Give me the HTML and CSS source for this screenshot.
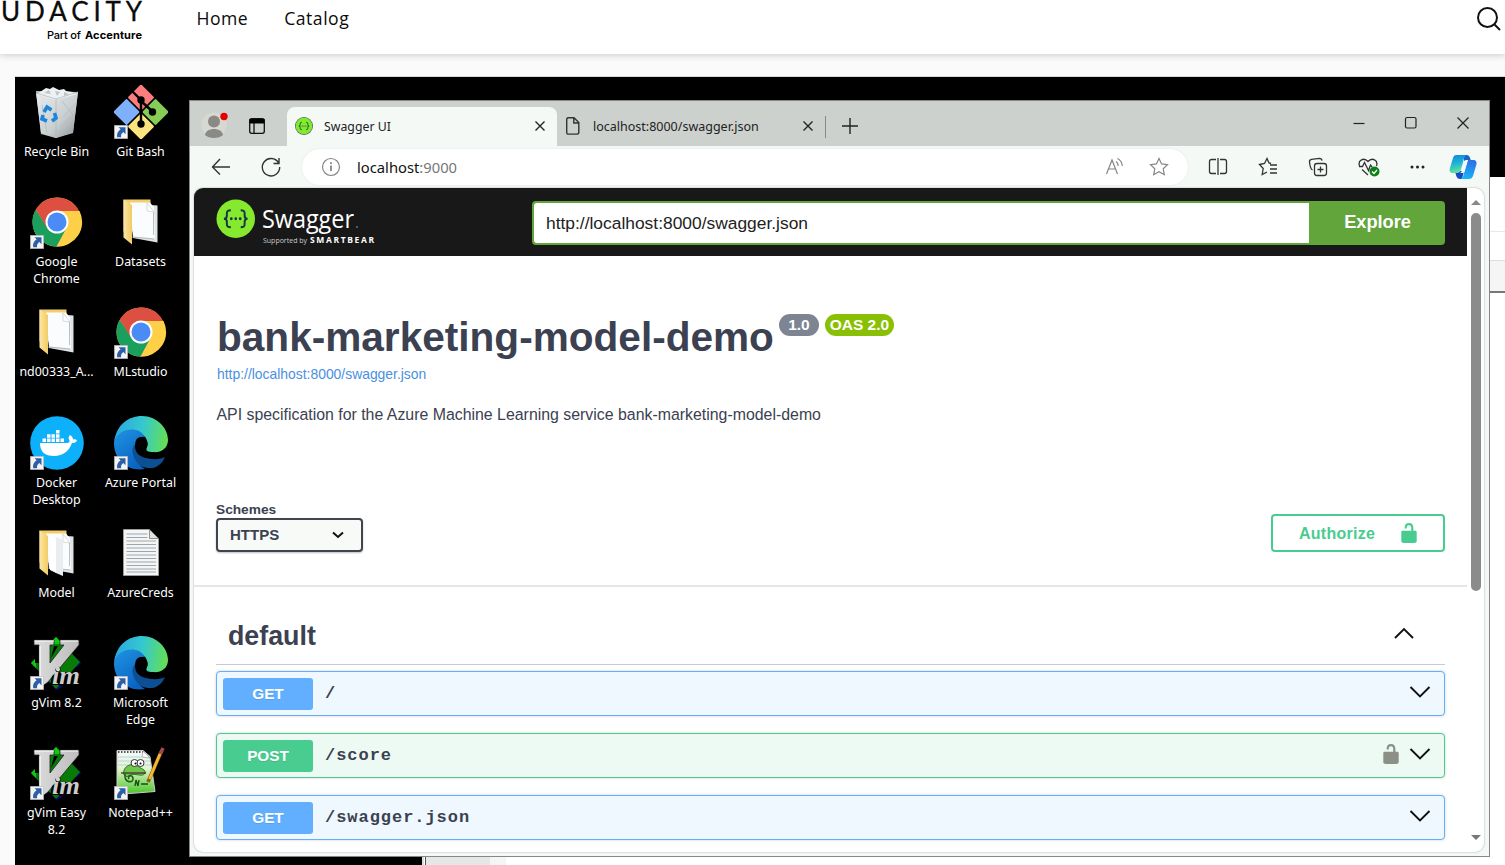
FILE: index.html
```html
<!DOCTYPE html>
<html lang="en">
<head>
<meta charset="utf-8">
<title>Udacity Workspace</title>
<link rel="stylesheet" href="styles.css">
</head>
<body>
<svg class="defs" width="0" height="0" aria-hidden="true">
  <defs>
    <linearGradient id="edgeTop" x1="0" y1="0.5" x2="1" y2="0.6"><stop offset="0" stop-color="#2aa9e0"/><stop offset=".5" stop-color="#35c8cf"/><stop offset="1" stop-color="#66e04f"/></linearGradient>
    <linearGradient id="edgeLeft" x1="0" y1="0" x2=".6" y2="1"><stop offset="0" stop-color="#1f95e2"/><stop offset="1" stop-color="#0a63c2"/></linearGradient>
    <linearGradient id="folderBack" x1="0" y1="0" x2="1" y2="0"><stop offset="0" stop-color="#fbe7a6"/><stop offset="1" stop-color="#f2cb62"/></linearGradient>
    <linearGradient id="vimV" x1="0" y1="0" x2="1" y2="0"><stop offset="0" stop-color="#dcdcdc"/><stop offset="1" stop-color="#bdbdbd"/></linearGradient>
    <linearGradient id="binBody" x1="0" y1="0" x2="1" y2="1"><stop offset="0" stop-color="#e8ecee"/><stop offset=".6" stop-color="#c9ced0"/><stop offset="1" stop-color="#8e9496"/></linearGradient>
    <linearGradient id="nppGrass" x1="0" y1="0" x2="0" y2="1"><stop offset="0" stop-color="#f4fbfd"/><stop offset=".4" stop-color="#e4f4d0"/><stop offset="1" stop-color="#47c425"/></linearGradient>
    <linearGradient id="copA" x1="0" y1="0" x2=".2" y2="1"><stop offset="0" stop-color="#1683d8"/><stop offset=".5" stop-color="#1cb3d8"/><stop offset="1" stop-color="#5fe39a"/></linearGradient>
    <linearGradient id="copB" x1=".6" y1="0" x2=".3" y2="1"><stop offset="0" stop-color="#2f6fe8"/><stop offset="1" stop-color="#16b9f5"/></linearGradient>
  </defs>
  <symbol id="arrow" viewBox="0 0 14 14"><path fill="#f4f4f4" stroke="#b9b9b9" stroke-width=".7" d="M.4.4h13.2v13.2H.4z"/><path fill="#2d5fa8" d="M4.500 2.200h7v7l-2.200-2.200c-2 1.500-2.500 3-2.200 5.300H3.200c-.6-3 .3-5.800 3.400-8z"/></symbol>
  <symbol id="chrome" viewBox="0 0 54 54">
    <circle cx="27" cy="27" r="24.500" fill="#fdd047"/>
    <path fill="#fdd047" d="M27 16h22.500A24.500 24.500 0 0 1 26 51.500L36.500 33z"/>
    <path fill="#1a9f5c" d="M26.500 51.500A24.500 24.500 0 0 1 5.800 14.700L17.500 32.500 27 38l9.500-5z"/>
    <path fill="#dc4f41" d="M5.800 14.700A24.500 24.500 0 0 1 49 16H27L17.300 33z"/>
    <circle cx="27" cy="27" r="11.500" fill="#fff"/><circle cx="27" cy="27" r="9.500" fill="#4b8bf5"/>
    <use href="#arrow" x="0" y="40" width="14" height="14"/>
  </symbol>
  <symbol id="edge" viewBox="0 0 54 54">
    <path fill="#0c4f94" d="M16 20c-5 20 5 33 23 32 6-2 10-6 12-11-8 4-24 4-25-12z"/>
    <path fill="url(#edgeLeft)" d="M0 27C0 18 8 11 18 13c7 0 12 4 14 8-6-1-11 2-11 7-6 6-1 19 10 25C12 56 0 43 0 27z"/>
    <path fill="url(#edgeTop)" d="M.5 24C3 9 14 0 28 0c15 0 26 12 26 24 0 9-8 13-15 12-5 0-9-1-6-5 2-4-1-12-8-16C15 11 5 15 .5 24z"/>
    <path fill="#000" d="M27 21c5 0 8 6 6 10s1 6 6 6c4 0 6-.5 8-1l3 4c-9 5-28 4-29-9 0-6 2-10 6-10z"/>
    <use href="#arrow" x="0" y="40" width="14" height="14"/>
  </symbol>
  <symbol id="folder" viewBox="0 0 54 54">
    <path fill="#f3cf6c" d="M9.500 4.500h27v32h-27z"/>
    <path fill="#dfe3e5" d="M17 8.500l26.500 2v37L19 43z"/>
    <path fill="#fafcfd" d="M16 7.500h20l4 5 1 31-22-2z"/>
    <path fill="#fff" stroke="#bfc4c7" stroke-width=".6" d="M33 8v8l7 1z"/>
    <path stroke="#aab0b4" stroke-width=".8" fill="none" d="M18 42l22 2M39.500 17v23"/>
    <path fill="url(#folderBack)" d="M9.500 4.500 18 10v39.500l-8.500-7z"/>
  </symbol>
  <symbol id="vim" viewBox="0 0 54 54">
    <path fill="#0a0a80" d="M45 21l6 6-5 5zM23 50l4 4 6-4z"/>
    <path fill="#087a08" d="M26 1l24 25-24 27L1 27z"/>
    <path fill="#10c810" d="M22 5l4-4 5 5-2 2h-7zM1 27l5-5v10z"/>
    <path fill="#000" d="M5 9h4v18H5zM24 10h4l-7 12z"/>
    <path fill="url(#vimV)" stroke="#222" stroke-width=".8" d="M4 4h20v5h-4v18L34 9h-4V4h19v5L18 46l-4 3H9V9H4z"/>
    <path fill="none" stroke="#fff" stroke-width="1.200" d="M4.500 5H24M30.500 5H48M10 10v30"/>
    <path fill="#000" d="M27 36h23v4l-2 9H20l2-9z"/>
    <circle cx="28" cy="33.500" r="2.400" fill="#ddd" stroke="#000" stroke-width=".8"/>
    <text x="22" y="48" textLength="28" lengthAdjust="spacingAndGlyphs" class="vim-text">im</text>
    <use href="#arrow" x="0" y="40" width="14" height="14"/>
  </symbol>
  <symbol id="lock" viewBox="0 0 20 20"><path fill="currentColor" d="M15.800 8H14V5.600C14 2.700 12.700 1 10 1 7.200 1 6 2.700 6 5.600V6h2v-.8C8 3.700 8.700 3 10 3s2 .8 2 2.200V8H4c-.6 0-1 .6-1 1.200v8.300c0 .5.700 1.200 1.200 1.400l1 .1h9.500l1-.1c.6-.2 1.300-.9 1.300-1.400V9.200c0-.6-.6-1.200-1.200-1.200z"/></symbol>
  <symbol id="braces" viewBox="0 0 40 40"><circle cx="20" cy="20" r="19.500" fill="#85ea2d"/><path fill="none" stroke="#173647" stroke-width="2" d="M15 11.500c-3 0-4 .6-4 3v2.500c0 2-1 3-3 3 2 0 3 1 3 3V25.500c0 2.400 1 3 4 3M25 11.500c3 0 4 .6 4 3v2.500c0 2 1 3 3 3-2 0-3 1-3 3V25.500c0 2.400-1 3-4 3"/><g fill="#173647"><circle cx="15.500" cy="20" r="1.400"/><circle cx="20" cy="20" r="1.400"/><circle cx="24.500" cy="20" r="1.400"/></g></symbol>
</svg>

<header class="site-header">
  <svg class="udacity" width="150" height="46" viewBox="0 0 150 46">
    <text class="brand" x="1" y="21" textLength="141">UDACITY</text>
    <text class="sub" x="47" y="38.500" textLength="34">Part of</text>
    <text class="sub sub-bold" x="85" y="38.500" textLength="57">Accenture</text>
  </svg>
  <nav class="site-nav"><a>Home</a><a>Catalog</a></nav>
  <svg class="search" width="28" height="28" viewBox="0 0 28 28"><circle cx="12.500" cy="12.500" r="9.500"/><path d="M19.500 19.500 25 25"/></svg>
</header>

<main class="desktop">
  <section class="shortcuts">
    <div class="shortcut"><svg viewBox="0 0 54 54">
      <path fill="#b9bfc1" d="M6 6l42 1-5 41-17 5-15-4z"/>
      <path fill="url(#binBody)" d="M6 8l20 5 22-6-5 40-17 6-15-5z"/>
      <path fill="#eef1f2" d="M7 9l6-4 3-2 4 1 3-2 6 3 5-1 2 2 6 1 5 2-10 3-12 3-10-3z"/>
      <path fill="#bfc5c7" d="M14 8l5-3 2 4zM25 6l5 1-3 4zM34 7l5 2-5 2z"/>
      <path stroke="#b4babd" stroke-width=".8" fill="none" d="M6 8l20 6 22-7M26 14v38M32 16l11 14-12 12M46 18l-13 14M12 20l5 28"/>
      <path fill="none" stroke="#1b86dc" stroke-width="3.600" d="M14 27l3-5 4.500 3M24.500 28l1.500 5-4 3M17 36l-5-2 1-4"/>
    </svg><span>Recycle Bin</span></div>
    <div class="shortcut"><svg viewBox="0 0 54 54">
      <rect x="17.500" y="3" width="19" height="19" rx="1.500" fill="#fb7d7d" transform="rotate(45 27 12.500)"/>
      <rect x="32" y="17.500" width="19" height="19" rx="1.500" fill="#86cd58" transform="rotate(45 41.500 27)"/>
      <rect x="17.500" y="32" width="19" height="19" rx="1.500" fill="#fbe380" transform="rotate(45 27 41.500)"/>
      <rect x="3" y="17.500" width="19" height="19" rx="1.500" fill="#7fb0fb" transform="rotate(45 12.500 27)"/>
      <path stroke="#000" stroke-width="2.400" fill="none" d="M18 6 27 15v24M27 16l12 11"/>
      <g><circle cx="27" cy="15" r="3.700"/><circle cx="38.500" cy="27" r="3.700"/><circle cx="27" cy="39" r="3.700"/></g>
      <use href="#arrow" x="0" y="40" width="14" height="14"/>
    </svg><span>Git Bash</span></div>
    <div class="shortcut"><svg><use href="#chrome"/></svg><span>Google Chrome</span></div>
    <div class="shortcut"><svg><use href="#folder"/></svg><span>Datasets</span></div>
    <div class="shortcut"><svg><use href="#folder"/></svg><span>nd00333_A...</span></div>
    <div class="shortcut"><svg><use href="#chrome"/></svg><span>MLstudio</span></div>
    <div class="shortcut"><svg viewBox="0 0 54 54">
      <circle cx="27" cy="27" r="26.800" fill="#0db0fb"/>
      <path fill="#fff" d="M10 27h27c2 0 3-1 2.500-2.500-1.500-2-1-4 .5-5.500 2 1 3 3 3 4.500 1.500-.5 3-.2 4 .7-.8 2-2.500 2.800-5 2.800C39 35 33 40 24 40c-9 0-14-4-14-13z"/>
      <path fill="#fff" d="M12.500 22.500h3.500V26h-3.500zM17 22.500h3.500V26H17zM21.500 22.500H25V26h-3.500zM26 22.500h3.500V26H26zM30.500 22.500H34V26h-3.500zM17 18.300h3.500v3.400H17zM21.500 18.300H25v3.400h-3.500zM26 18.300h3.500v3.400H26zM26 14h3.500v3.400H26z"/>
      <use href="#arrow" x="0" y="40" width="14" height="14"/>
    </svg><span>Docker Desktop</span></div>
    <div class="shortcut"><svg><use href="#edge"/></svg><span>Azure Portal</span></div>
    <div class="shortcut"><svg viewBox="0 0 54 54"><use href="#folder"/><path fill="#e9edef" d="M26 11l7 3v36l-7-3z"/><path fill="#fff" d="M20 10l6 4v33l-6-3z"/></svg><span>Model</span></div>
    <div class="shortcut"><svg viewBox="0 0 54 54">
      <path fill="#f5f5f5" stroke="#9b9b9b" d="M9.500 3.500h26l9 9v37h-35z"/><path fill="#e2e2e2" stroke="#777" stroke-width=".8" d="M35.500 3.500v9h9z"/>
      <path stroke="#9aa7ae" d="M12.500 8h21M12.500 11.500h21M12.500 15H42M12.500 18.500H42M12.500 22H42M12.500 25.500H42M12.500 29H42M12.500 32.500H42M12.500 36H42M12.500 39.500H42M12.500 43H42M12.500 46H42"/>
    </svg><span>AzureCreds</span></div>
    <div class="shortcut"><svg><use href="#vim"/></svg><span>gVim 8.2</span></div>
    <div class="shortcut"><svg><use href="#edge"/></svg><span>Microsoft Edge</span></div>
    <div class="shortcut"><svg><use href="#vim"/></svg><span>gVim Easy 8.2</span></div>
    <div class="shortcut"><svg viewBox="0 0 54 54">
      <path fill="url(#nppGrass)" stroke="#c8ccc8" d="M3 4.500h26l7 6 5 35-38 3z"/>
      <path stroke="#555" stroke-width="2" stroke-dasharray="1.500 1.500" d="M4 6h25"/>
      <path fill="#fff" stroke="#999" stroke-width=".7" d="M29 5l-1 6 8 1z"/>
      <path stroke="#a9c9dc" stroke-width=".8" d="M4 11h24M4 15h32M4 19h33"/>
      <path fill="#6dc84a" stroke="#1f5f16" stroke-width=".8" d="M10 29c-2-8 6-12 12-10l8 5c3 3 0 6-5 5-6-1-9-1-12 2z"/>
      <path fill="none" stroke="#1f5f16" stroke-width="1.600" d="M11 28c-1 9 9 10 8 4-1-4-6-2-4 1"/>
      <circle cx="20.500" cy="17" r="3.500" fill="#fff" stroke="#333"/><circle cx="26.500" cy="17" r="3.500" fill="#fff" stroke="#333"/><circle cx="21.500" cy="17.500" r="1"/><circle cx="26.500" cy="17.500" r="1"/>
      <path stroke="#4a1d3a" stroke-width="1.200" d="M7 27h25"/>
      <path stroke="#155015" stroke-width="1.400" fill="none" d="M21 40l1-6 2 6 1-6M27 38h7"/>
      <path stroke="#8a5a14" stroke-width="3.600" d="M34 36 47 6"/><path stroke="#f5b630" stroke-width="2.800" d="M35.500 33 46 8"/><path stroke="#a04a50" stroke-width="3.600" d="M46.500 7.500 49 2"/>
      <use href="#arrow" x="0" y="40" width="14" height="14"/>
    </svg><span>Notepad++</span></div>
  </section>

  <div class="back-window">
    <div class="bw-row bw-a"></div><div class="bw-row bw-b"></div><div class="bw-row bw-c"></div>
    <div class="bw-body"><i class="bw-s1"></i><i class="bw-s2"></i><i class="bw-s3"></i></div>
  </div>

  <section class="browser">
    <div class="tabs">
      <svg class="profile" width="30" height="30" viewBox="0 0 30 30"><circle cx="14" cy="16" r="12.500" fill="#d8d8d2"/><circle cx="14" cy="12.500" r="6" fill="#8b8984"/><path fill="#8b8984" d="M5 26c1-8 17-8 18 0-4 4-14 4-18 0z"/><circle cx="24" cy="7.500" r="3.700" fill="#e60000"/></svg>
      <svg class="tabmenu" width="18" height="18" viewBox="0 0 18 18"><rect x="1.700" y="1.700" width="14.600" height="14.600" rx="2" fill="none" stroke="#111" stroke-width="1.300"/><path d="M1.500 2h15v4.500h-15z"/><path d="M6 6v10" stroke="#111" stroke-width="1.300"/></svg>
      <div class="tab active">
        <svg width="18" height="18"><circle cx="9" cy="9" r="9" fill="#4c6f58"/><use href="#braces" x=".5" y=".5" width="17" height="17"/></svg><span>Swagger UI</span>
        <svg class="x" width="12" height="12" viewBox="0 0 12 12"><path d="M1.500 1.500l9 9M10.500 1.500l-9 9"/></svg>
      </div>
      <div class="tab">
        <svg width="18" height="20" viewBox="0 0 18 20"><path fill="none" stroke="#333" stroke-width="1.400" d="M3.500 1.700h6.500l4.800 4.800v9.800c0 1.200-.6 1.800-1.800 1.800H4.500c-1.200 0-1.800-.6-1.800-1.800V3.500c0-1.200.5-1.800 1.800-1.800M9.800 2v5h5"/></svg><span>localhost:8000/swagger.json</span>
        <svg class="x" width="12" height="12" viewBox="0 0 12 12"><path d="M1.500 1.500l9 9M10.500 1.500l-9 9"/></svg>
      </div>
      <i class="sep"></i>
      <svg class="plus" width="18" height="18" viewBox="0 0 18 18"><path d="M9 1v16M1 9h16"/></svg>
      <div class="controls">
        <svg width="14" height="14" viewBox="0 0 14 14"><path d="M1.500 7.500h11"/></svg>
        <svg width="14" height="14" viewBox="0 0 14 14"><rect x="1.500" y="1.500" width="10.500" height="10.500" rx="1.500"/></svg>
        <svg width="14" height="14" viewBox="0 0 14 14"><path d="M1.500 1.500l11 11M12.500 1.500l-11 11"/></svg>
      </div>
    </div>

    <div class="toolbar">
      <svg class="back" width="20" height="20" viewBox="0 0 20 20"><path d="M9 2 1.500 10 9 17.500M1.500 10H19"/></svg>
      <svg class="reload" width="22" height="22" viewBox="0 0 22 22"><path d="M18.500 6.800A8.700 8.700 0 1 0 19.700 11M19 2v5.500h-5.500"/></svg>
      <div class="address">
        <svg width="20" height="20" viewBox="0 0 20 20"><circle cx="10" cy="10" r="8.500"/><path stroke-width="1.800" d="M10 8.500V14M10 5.300v1.700"/></svg>
        <span class="host">localhost<span class="port">:9000</span></span>
        <svg class="read" width="20" height="20" viewBox="0 0 20 20"><path d="M1.500 17 7 3l5.500 14M3.500 12h7M11 4.500c1.500 1 2.200 2.500 2.200 4.500M12.500 1.500c3 1.500 4.600 4 4.800 7.500"/></svg>
        <svg class="star" width="20" height="20" viewBox="0 0 20 20"><path d="M10 1.500l2.600 5.400 5.900.8-4.300 4.100 1.100 5.900L10 14.800l-5.300 2.900 1.100-5.900L1.500 7.700l5.900-.8z"/></svg>
      </div>
      <div class="tools">
        <svg width="20" height="20" viewBox="0 0 20 20"><path d="M8 2.500H3.500c-1.200 0-2 .8-2 2v10c0 1.200.8 2 2 2H8M12 2.500h4.500c1.200 0 2 .8 2 2v10c0 1.200-.8 2-2 2H12M10 1v17"/></svg>
        <svg width="20" height="20" viewBox="0 0 20 20"><path d="M13 6.500 11 6 9 1.500 6.500 6.500 1.500 7.500l3.700 4-1 6L9 15M12 8h7M12 12h7M12 16h7"/></svg>
        <svg width="20" height="20" viewBox="0 0 20 20"><rect x="6.500" y="6.500" width="12" height="12" rx="2.500"/><path d="M12.500 9.500v6M9.500 12.500h6M4.500 13C2.500 12 2 10 1.500 5c-.2-1.500.5-2.300 2-2.600l8-1c1.500 0 2.300.8 2.500 2.300"/></svg>
        <svg width="22" height="20" viewBox="0 0 22 20"><path d="M1.500 9C-.5 3 6 0 10 4.500 14 0 20.500 3 18.500 9M1 9.500h3.500l2-4 4 8 2-5.500 1.500 2M4 12.500l6 5.500"/><circle cx="16.500" cy="14.500" r="5" fill="#0b8014" stroke="none"/><path stroke="#fff" d="M14 14.500l2 2 3-3.500"/></svg>
        <svg width="20" height="20" viewBox="0 0 20 20"><g fill="#222" stroke="none"><circle cx="4" cy="10" r="1.500"/><circle cx="9.500" cy="10" r="1.500"/><circle cx="15" cy="10" r="1.500"/></g></svg>
      </div>
      <svg class="copilot" width="28" height="26" viewBox="0 0 28 26"><path fill="#1749c8" d="M6 17h9l-2 8h-2c-3 0-4-3-5-8z"/><path fill="#1465c8" d="M15 1h3c2 0 3 2 4 6h-7z"/><path fill="url(#copB)" d="M19 6h5c3 0 4 2 3.400 4.500L24 22c-.8 2-2 3-4 3h-9c2-.5 3-2 3.700-4.500L17.500 10c.4-2.500.5-3.500 1.500-4z"/><path fill="url(#copA)" d="M7.500 1H18c-2 .5-2.700 2-3.300 4.500L12 15.500C11.300 18 10 19 8 19H4C1 19 .2 17 .8 14.500L4 4c.6-2 1.500-3 3.500-3z"/><path fill="#f5f9f6" d="M14.500 8.500c.4-1.500 1.200-2.300 2.600-2.500h2l-3.600 11.500c-.5 1.200-1.300 1.500-2.500 1.500h-2c1.200-.5 1.500-1 1.900-2.500z"/></svg>
    </div>

    <div class="viewport">
      <div class="page">
        <div class="topbar">
          <svg class="swagger" width="162" height="48" viewBox="0 0 162 48">
            <use href="#braces" x="0" y="1" width="39.500" height="39.500"/>
            <text class="sw-name" x="46" y="30" textLength="92" lengthAdjust="spacingAndGlyphs">Swagger</text>
            <circle cx="141" cy="29" r=".8" fill="#aaa"/>
            <text class="sw-sup" x="47" y="45" textLength="44" lengthAdjust="spacingAndGlyphs">Supported by</text>
            <text class="sw-sb" x="94" y="45" textLength="64">SMARTBEAR</text>
          </svg>
          <div class="url-form"><div class="url-input">http://localhost:8000/swagger.json</div><div class="explore">Explore</div></div>
        </div>
        <div class="info">
          <div class="title-row"><h1>bank-marketing-model-demo</h1><span class="badge version">1.0</span><span class="badge oas">OAS 2.0</span></div>
          <a class="spec-link">http://localhost:8000/swagger.json</a>
          <p class="desc">API specification for the Azure Machine Learning service bank-marketing-model-demo</p>
        </div>
        <div class="schemes">
          <div class="scheme-box"><label>Schemes</label>
            <div class="select"><span>HTTPS</span><svg width="14" height="10" viewBox="0 0 14 10"><path fill="none" stroke="#111" stroke-width="2" d="M2 2.500l5 4.500 5-4.500"/></svg></div></div>
          <div class="authorize"><span>Authorize</span><svg width="22" height="22"><use href="#lock"/></svg></div>
        </div>
        <div class="ops">
          <div class="tag"><h2>default</h2><svg class="chev" width="22" height="14" viewBox="0 0 22 14"><path d="M2 12 11 3l9 9"/></svg></div>
          <div class="op get"><b>GET</b><code>/</code><svg class="chev" width="22" height="14" viewBox="0 0 22 14"><path d="M1.500 2 11 11.500 20.500 2"/></svg></div>
          <div class="op post"><b>POST</b><code>/score</code><svg class="op-lock" width="22" height="22"><use href="#lock"/></svg><svg class="chev" width="22" height="14" viewBox="0 0 22 14"><path d="M1.500 2 11 11.500 20.500 2"/></svg></div>
          <div class="op get"><b>GET</b><code>/swagger.json</code><svg class="chev" width="22" height="14" viewBox="0 0 22 14"><path d="M1.500 2 11 11.500 20.500 2"/></svg></div>
        </div>
      </div>
      <div class="scrollbar"><i class="up"></i><i class="thumb"></i><i class="down"></i></div>
    </div>
  </section>
</main>
</body>
</html>
```

FILE: styles.css
```css
* { box-sizing: border-box; }
body { margin: 0; width: 1505px; height: 865px; overflow: hidden; background: #fafafa; font-family: "Noto Sans", "Open Sans", sans-serif; display: flex; flex-direction: column; }
svg { display: block; flex: none; }
.defs { position: absolute; }

.site-header { height: 54px; flex: none; display: flex; background: #fff; box-shadow: 0 1px 7px rgba(0,0,0,.2); position: relative; }
.udacity { overflow: visible; }
.brand { font: 26px Lato, sans-serif; fill: #0b0b0b; stroke: #0b0b0b; stroke-width: .3px; }
.sub { font: 500 11px Inter, sans-serif; fill: #000; }
.sub-bold { font-weight: 700; }
.site-nav { display: flex; gap: 36px; margin-left: 46.500px; padding-top: 6px; font: 500 17.600px/25px "Open Sans", sans-serif; letter-spacing: .5px; color: #0b0b0b; }
.search { margin: 5px 1px 0 auto; width: 30px; }
.search circle, .search path { fill: none; stroke: #111; stroke-width: 2; }

.desktop { position: relative; flex: 1; margin: 23px 0 0 15px; background: #000; box-shadow: 0 -1px #d5d9d6; overflow: hidden; }
.shortcuts { display: grid; grid-template-columns: 84px 84px; grid-auto-rows: 110.200px; width: 168px; padding-top: 8px; margin-left: -.5px; }
.shortcut { display: flex; flex-direction: column; align-items: center; color: #fff; font-size: 12.400px; line-height: 17px; text-align: center; }
.shortcut svg { width: 54px; height: 54px; margin-bottom: 4px; }
.shortcut span { width: 80px; white-space: nowrap; }
.shortcut:nth-child(3) span, .shortcut:nth-child(7) span, .shortcut:nth-child(12) span, .shortcut:nth-child(13) span { width: 64px; white-space: normal; }
.vim-text { font: italic bold 25px "Liberation Serif", serif; fill: #ccc; }

.back-window { position: absolute; left: 407px; top: 100px; width: 1083px; height: 688px; background: #fff; display: flex; flex-direction: column; }
.bw-a { height: 55px; border-bottom: 1px solid #e8e8e8; }
.bw-b { height: 29px; border-bottom: 1px solid #ddd; }
.bw-c { height: 32px; background: #f5f5f5; border-bottom: 2px solid #777; }
.bw-body { flex: 1; display: flex; }
.bw-s1 { width: 4px; border-left: 2px solid #ddd; border-right: 1px solid #555; }
.bw-s2 { width: 64px; background: #e5e7e6; }
.bw-s3 { width: 16px; background: #f5f5f5; }

.browser { position: absolute; left: 174px; top: 23px; width: 1301px; height: 757px; border: 1px solid #858885; background: #f5f9f6; display: flex; flex-direction: column; }
.tabs { height: 45px; flex: none; background: #cdd1ce; display: flex; align-items: center; padding-top: 6px; position: relative; }
.profile { margin-left: 10px; margin-top: -6px; }
.tabmenu { margin-left: 18px; margin-top: -1px; }
.tab { display: flex; align-items: center; width: 268px; height: 39px; padding: 0 12px 1px 8px; font-size: 12.300px; color: #222; }
.tab.active { margin-left: 21px; width: 270px; background: #f5f9f6; border-radius: 8px 8px 0 0; padding: 0 11px 1px 8px; }
.tab span { margin-left: 11px; }
.tab.active + .tab { padding-left: 7px; }
.tab.active + .tab { font-size: 12.500px; width: 267px; padding-right: 10px; border-radius: 0 0 0 8px; }
.x { margin-left: auto; }
.x path, .plus path { fill: none; stroke: #222; stroke-width: 1.400; }
.sep { width: 1px; height: 22px; background: #888; margin-left: 1px; }
.plus { margin-left: 15px; margin-top: -2px; }
.controls { margin: -7px 19px 0 auto; display: flex; gap: 38px; }
.controls svg * { fill: none; stroke: #222; stroke-width: 1.200; }

.toolbar { height: 42px; flex: none; display: flex; align-items: center; position: relative; }
.back { margin-left: 21px; }
.reload { margin-left: 29px; }
.back path, .reload path { fill: none; stroke: #333; stroke-width: 1.400; }
.address { width: 886px; height: 36px; margin-left: 20px; border-radius: 18px; background: #fff; box-shadow: 0 0 2px rgba(0,0,0,.1); display: flex; align-items: center; padding: 0 19px; }
.address svg { fill: none; stroke: #858585; stroke-width: 1.200; }
.host { margin-left: 16px; font-size: 14.750px; color: #111; }
.port { color: #777; }
.read { margin-left: auto; }
.star { margin-left: 24px; }
.tools { display: flex; gap: 30px; margin-left: 20px; align-items: center; }
.tools svg { fill: none; stroke: #333; stroke-width: 1.300; }
.tools svg:last-child { margin-left: -2px; }
.copilot { margin-left: 21px; }

.viewport { width: 1290px; height: 664px; margin-left: 4px; background: #fff; border-radius: 9px; overflow: hidden; display: flex; box-shadow: 0 0 2px rgba(0,0,0,.35); }
.page { width: 1273px; font-family: "Liberation Sans", Arial, sans-serif; color: #3b4151; }
.topbar { height: 68px; background: #181818; display: flex; justify-content: space-between; align-items: center; padding: 1px 22px 0; }
.swagger { margin-top: -1px; }
.sw-name { font: 26px "Open Sans", sans-serif; fill: #fff; }
.sw-sup { font: 7px "Open Sans", sans-serif; fill: #ccc; }
.sw-sb { font: bold 8.500px "Open Sans", sans-serif; fill: #fff; }
.url-form { display: flex; width: 913px; height: 44px; border: 2px solid #62a53a; border-radius: 4px; background: #62a53a; overflow: hidden; }
.url-input { flex: 1; background: #fff; border-radius: 2px 0 0 2px; padding-left: 12px; font-size: 17.400px; line-height: 40px; color: #222; }
.explore { width: 134px; text-align: center; font-weight: bold; font-size: 18.200px; line-height: 39px; color: #fff; padding-left: 3px; }
.info { height: 245px; padding: 57px 23px 0; }
.title-row { display: flex; align-items: flex-start; height: 48px; }
h1 { margin: 0; font-size: 40.600px; line-height: 48px; white-space: nowrap; }
.badge { height: 22px; margin-top: 1px; border-radius: 11px; color: #fff; font-weight: bold; font-size: 15.500px; line-height: 22px; text-align: center; }
.version { width: 40px; margin-left: 5px; background: #7d8492; }
.oas { width: 69px; margin-left: 6px; background: #89bf04; }
.spec-link { display: block; margin-top: 4px; font-size: 13.900px; line-height: 18px; color: #4990e2; }
.desc { margin: 22px 0 0 -.5px; font-size: 15.880px; line-height: 20px; white-space: nowrap; }
.schemes { height: 86px; border-bottom: 2px solid #e6e6e6; padding: 0 22px; display: flex; justify-content: space-between; }
.scheme-box { display: flex; flex-direction: column; }
label { font-size: 13.700px; font-weight: bold; line-height: 17px; }
.select { width: 147px; height: 34px; border: 2px solid #41444e; border-radius: 4px; background: #f7faf7; box-shadow: 0 1px 2px rgba(0,0,0,.25); display: flex; align-items: center; justify-content: space-between; padding: 0 16px 1px 12px; font-weight: bold; font-size: 15px; }
.authorize { width: 174px; height: 38px; margin-top: 13px; border: 2px solid #49cc90; border-radius: 4px; color: #49cc90; display: flex; align-items: center; justify-content: space-between; padding: 0 23px 0 26px; font-weight: bold; font-size: 16px; letter-spacing: .25px; }
.authorize span { padding-top: 2px; }
.ops { padding: 0 22px; }
.tag { height: 78px; border-bottom: 1px solid #c9cacd; display: flex; align-items: center; justify-content: space-between; padding: 20px 30px 0 12px; }
h2 { margin: 0; font-size: 26.800px; line-height: 32px; }
.tag .chev { margin-bottom: 6px; }
.chev path { fill: none; stroke: #111; stroke-width: 1.900; }
.op { height: 45px; margin: 6px 0 17px; border: 1px solid; border-radius: 4px; box-shadow: 0 0 3px rgba(0,0,0,.19); display: flex; align-items: center; padding: 0 13px 0 6px; }
.op + .op { margin-top: 17px; }
.op b { width: 90px; height: 32px; border-radius: 3px; color: #fff; font-size: 15.300px; line-height: 32px; text-align: center; text-shadow: 0 1px rgba(0,0,0,.1); }
.op code { margin-left: 12px; font: bold 17px "Liberation Mono", monospace; letter-spacing: .96px; }
.op .chev { margin-left: auto; margin-bottom: 3px; }
.op-lock { margin-left: auto; margin-bottom: 3px; color: #8b9087; }
.op-lock + .chev { margin-left: 7px !important; }
.get { background: #eff7ff; border-color: #61affe; }
.get b { background: #61affe; }
.post { background: #edfaf4; border-color: #49cc90; }
.post b { background: #49cc90; }

.scrollbar { width: 17px; display: flex; flex-direction: column; align-items: center; padding: 12px 0; }
.up { border: 5px solid transparent; border-top: 0; border-bottom: 5px solid #888; }
.thumb { width: 10px; height: 378px; margin-top: 8px; background: #8b8b8b; border-radius: 5px; }
.down { margin-top: auto; border: 5px solid transparent; border-bottom: 0; border-top: 5px solid #777; }
```
